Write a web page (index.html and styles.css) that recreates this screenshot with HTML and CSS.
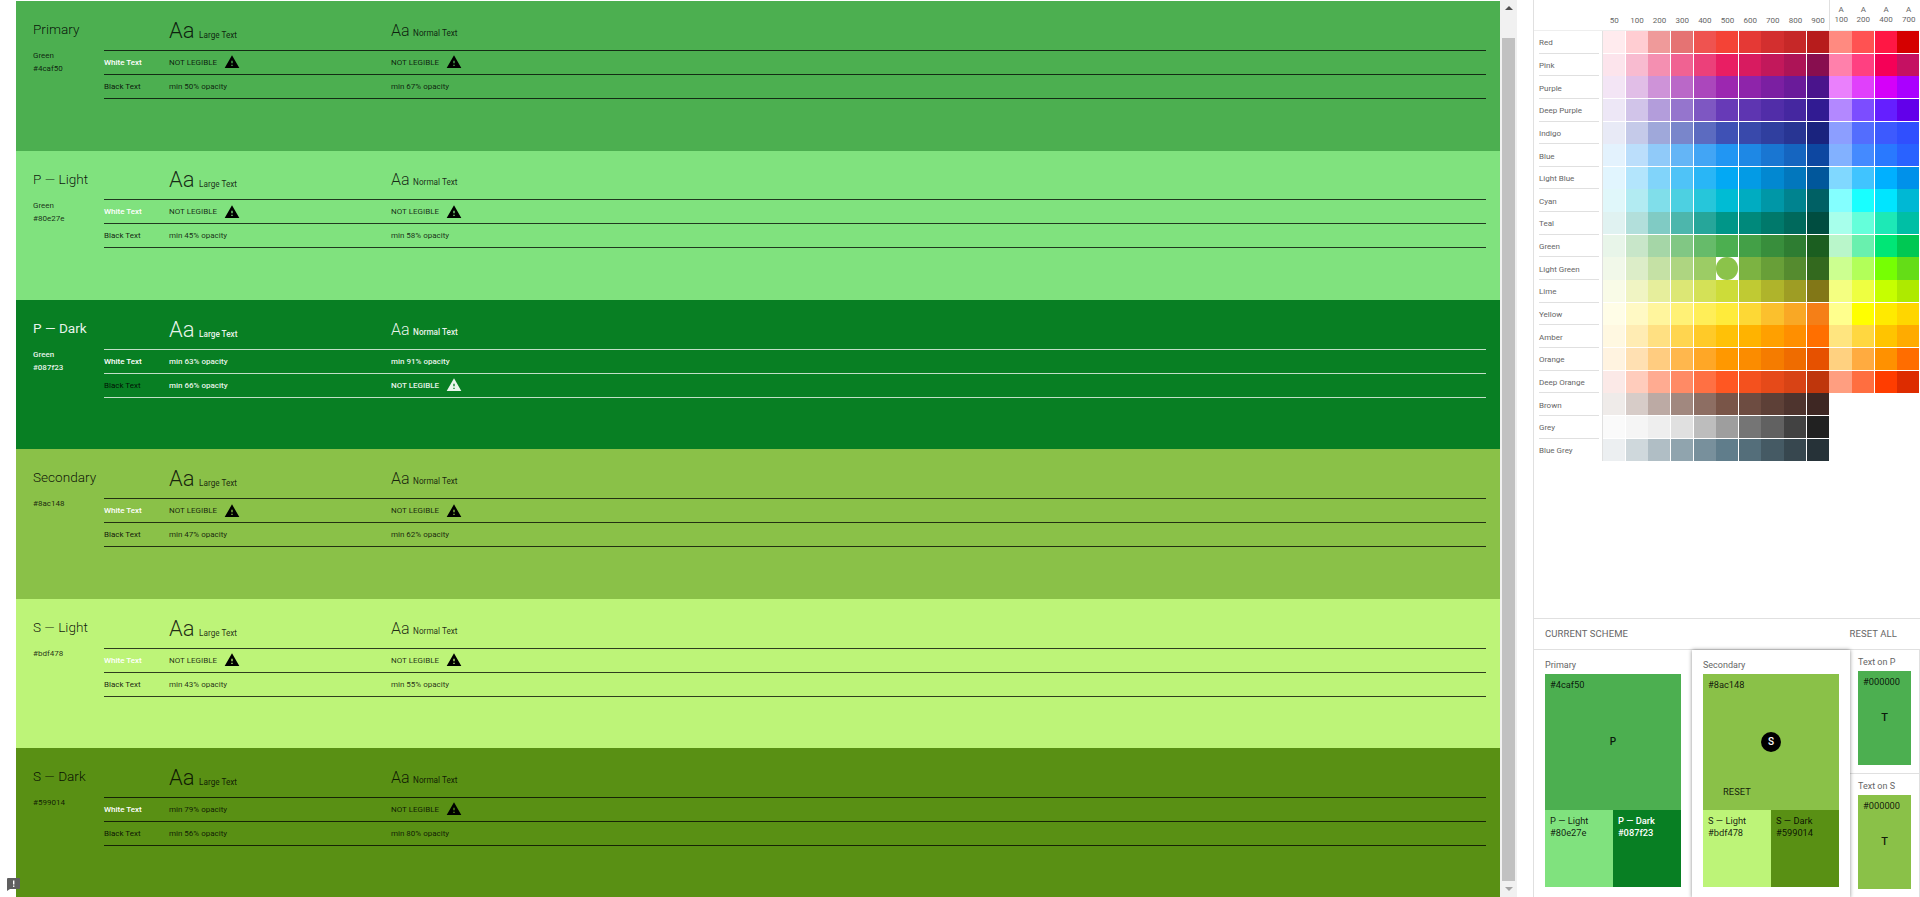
FILE: index.html
```html
<!DOCTYPE html>
<html lang="en">
<head>
    <meta charset="UTF-8">
    <meta name="viewport" content="width=device-width, initial-scale=1.0">
    <title>Color Tool</title>
    <link rel="stylesheet" href="styles.css">
</head>
<body>
    <svg class="icon-defs" width="0" height="0">
        <symbol id="warning" viewBox="0 0 24 24">
            <path d="M1 21h22L12 2 1 21zm12-3h-2v-2h2v2zm0-4h-2v-4h2v4z"/>
        </symbol>
    </svg>

    <main class="preview">
        <section class="panel primary">
            <div class="info">
                <h2>Primary</h2>
                <p>Green</p>
                <p>#4caf50</p>
            </div>
            <div class="contrast">
                <div class="contrast-row head">
                    <span></span>
                    <span><b class="aa-large">Aa</b> Large Text</span>
                    <span><b class="aa-normal">Aa</b> Normal Text</span>
                </div>
                <div class="contrast-row">
                    <span class="white-label">White Text</span>
                    <span class="bad">NOT LEGIBLE <svg><use href="#warning"/></svg></span>
                    <span class="bad">NOT LEGIBLE <svg><use href="#warning"/></svg></span>
                </div>
                <div class="contrast-row">
                    <span class="black-label">Black Text</span>
                    <span>min 50% opacity</span>
                    <span>min 67% opacity</span>
                </div>
            </div>
        </section>

        <section class="panel p-light">
            <div class="info">
                <h2>P — Light</h2>
                <p>Green</p>
                <p>#80e27e</p>
            </div>
            <div class="contrast">
                <div class="contrast-row head">
                    <span></span>
                    <span><b class="aa-large">Aa</b> Large Text</span>
                    <span><b class="aa-normal">Aa</b> Normal Text</span>
                </div>
                <div class="contrast-row">
                    <span class="white-label">White Text</span>
                    <span class="bad">NOT LEGIBLE <svg><use href="#warning"/></svg></span>
                    <span class="bad">NOT LEGIBLE <svg><use href="#warning"/></svg></span>
                </div>
                <div class="contrast-row">
                    <span class="black-label">Black Text</span>
                    <span>min 45% opacity</span>
                    <span>min 58% opacity</span>
                </div>
            </div>
        </section>

        <section class="panel p-dark">
            <div class="info">
                <h2>P — Dark</h2>
                <p>Green</p>
                <p>#087f23</p>
            </div>
            <div class="contrast">
                <div class="contrast-row head">
                    <span></span>
                    <span><b class="aa-large">Aa</b> Large Text</span>
                    <span><b class="aa-normal">Aa</b> Normal Text</span>
                </div>
                <div class="contrast-row">
                    <span class="white-label">White Text</span>
                    <span>min 63% opacity</span>
                    <span>min 91% opacity</span>
                </div>
                <div class="contrast-row">
                    <span class="black-label">Black Text</span>
                    <span>min 66% opacity</span>
                    <span class="bad">NOT LEGIBLE <svg><use href="#warning"/></svg></span>
                </div>
            </div>
        </section>

        <section class="panel secondary">
            <div class="info">
                <h2>Secondary</h2>
                <p>#8ac148</p>
            </div>
            <div class="contrast">
                <div class="contrast-row head">
                    <span></span>
                    <span><b class="aa-large">Aa</b> Large Text</span>
                    <span><b class="aa-normal">Aa</b> Normal Text</span>
                </div>
                <div class="contrast-row">
                    <span class="white-label">White Text</span>
                    <span class="bad">NOT LEGIBLE <svg><use href="#warning"/></svg></span>
                    <span class="bad">NOT LEGIBLE <svg><use href="#warning"/></svg></span>
                </div>
                <div class="contrast-row">
                    <span class="black-label">Black Text</span>
                    <span>min 47% opacity</span>
                    <span>min 62% opacity</span>
                </div>
            </div>
        </section>

        <section class="panel s-light">
            <div class="info">
                <h2>S — Light</h2>
                <p>#bdf478</p>
            </div>
            <div class="contrast">
                <div class="contrast-row head">
                    <span></span>
                    <span><b class="aa-large">Aa</b> Large Text</span>
                    <span><b class="aa-normal">Aa</b> Normal Text</span>
                </div>
                <div class="contrast-row">
                    <span class="white-label">White Text</span>
                    <span class="bad">NOT LEGIBLE <svg><use href="#warning"/></svg></span>
                    <span class="bad">NOT LEGIBLE <svg><use href="#warning"/></svg></span>
                </div>
                <div class="contrast-row">
                    <span class="black-label">Black Text</span>
                    <span>min 43% opacity</span>
                    <span>min 55% opacity</span>
                </div>
            </div>
        </section>

        <section class="panel s-dark">
            <div class="info">
                <h2>S — Dark</h2>
                <p>#599014</p>
            </div>
            <div class="contrast">
                <div class="contrast-row head">
                    <span></span>
                    <span><b class="aa-large">Aa</b> Large Text</span>
                    <span><b class="aa-normal">Aa</b> Normal Text</span>
                </div>
                <div class="contrast-row">
                    <span class="white-label">White Text</span>
                    <span>min 79% opacity</span>
                    <span class="bad">NOT LEGIBLE <svg><use href="#warning"/></svg></span>
                </div>
                <div class="contrast-row">
                    <span class="black-label">Black Text</span>
                    <span>min 56% opacity</span>
                    <span>min 80% opacity</span>
                </div>
            </div>
        </section>
    </main>

    <div class="scrollbar">
        <div class="arrow-up"></div>
        <div class="thumb"></div>
        <div class="arrow-down"></div>
    </div>

    <aside class="sidebar">
        <div class="palette">
            <div class="palette-head">
                <div class="head-spacer"></div>
                <div class="head-cols" id="paletteHead"></div>
            </div>
            <div class="palette-body">
                <ul class="hue-names" id="hueNames"></ul>
                <div class="swatches" id="swatches"></div>
            </div>
        </div>

        <div class="scheme">
            <div class="scheme-title">
                <span>Current Scheme</span>
                <span class="reset-all">Reset All</span>
            </div>
            <div class="scheme-cards">
                <div class="card">
                    <div class="card-label">Primary</div>
                    <div class="main-swatch primary">
                        <span>#4caf50</span>
                        <span class="letter">P</span>
                    </div>
                    <div class="sub-swatches">
                        <div class="p-light">P — Light<br>#80e27e</div>
                        <div class="p-dark">P — Dark<br>#087f23</div>
                    </div>
                </div>
                <div class="card active">
                    <div class="card-label">Secondary</div>
                    <div class="main-swatch secondary">
                        <span>#8ac148</span>
                        <span class="letter selected">S</span>
                        <span class="reset">RESET</span>
                    </div>
                    <div class="sub-swatches">
                        <div class="s-light">S — Light<br>#bdf478</div>
                        <div class="s-dark">S — Dark<br>#599014</div>
                    </div>
                </div>
                <div class="text-cards">
                    <div class="text-card">
                        <div class="card-label">Text on P</div>
                        <div class="text-swatch primary">
                            <span>#000000</span>
                            <span class="letter">T</span>
                        </div>
                    </div>
                    <div class="text-card">
                        <div class="card-label">Text on S</div>
                        <div class="text-swatch secondary">
                            <span>#000000</span>
                            <span class="letter">T</span>
                        </div>
                    </div>
                </div>
            </div>
        </div>
    </aside>

    <svg class="feedback" viewBox="0 0 13 13">
        <path d="M1 0h11a1 1 0 0 1 1 1v9a1 1 0 0 1-1 1H3l-3 2V1a1 1 0 0 1 1-1z"/>
        <rect x="6" y="2.5" width="1.4" height="4" fill="#fff"/>
        <rect x="6" y="7.5" width="1.4" height="1.4" fill="#fff"/>
    </svg>

    <script src="script.js"></script>
</body>
</html>
```

FILE: styles.css
```css
* {
    box-sizing: border-box;
}

body {
    margin: 0;
    height: 897px;
    overflow: hidden;
    display: flex;
    background: white;
    font-family: Roboto, sans-serif;
    font-size: 8px;
    color: #666;
}

/* scheme colours */
.primary { background: #4caf50; }
.p-light { background: #80e27e; }
.p-dark { background: #087f23; color: white; }
.secondary { background: #8ac148; }
.s-light { background: #bdf478; }
.s-dark { background: #599014; }

/* left preview column */
.preview {
    width: 1500px;
    padding: 1.2px 0 0 16px;
    flex-shrink: 0;
}

.panel {
    height: 149.4px;
    padding: 0 14px 0 17px;
    display: flex;
    color: rgba(0, 0, 0, 0.82);
    border-color: rgba(0, 0, 0, 0.75);
}

.panel.p-dark {
    color: rgba(255, 255, 255, 0.92);
    border-color: rgba(255, 255, 255, 0.75);
    font-weight: 500;
}

.info {
    width: 71px;
    flex-shrink: 0;
    padding-top: 21px;
}

.info h2 {
    margin: 0 0 13px;
    font-size: 13.6px;
    line-height: 14px;
    font-weight: 300;
    white-space: nowrap;
    color: rgba(0, 0, 0, 0.9);
}

.p-dark .info h2 {
    font-weight: 400;
    color: rgba(255, 255, 255, 0.92);
}

.info p {
    margin: 0;
    line-height: 13px;
}

.contrast {
    flex: 1;
    border-color: inherit;
}

.contrast-row {
    display: grid;
    grid-template-columns: 65px 222px 1fr;
    align-items: center;
    height: 24px;
    border-bottom: 1px solid;
    border-color: inherit;
}

.contrast-row.head {
    height: 49.8px;
    align-items: end;
    padding-bottom: 6px;
    font-size: 8.2px;
}

.aa-large {
    font-size: 22px;
    font-weight: 300;
    line-height: 26px;
    margin-right: 2.5px;
}

.aa-normal {
    font-size: 16px;
    font-weight: 300;
    line-height: 26px;
    margin-right: 1.5px;
}

.white-label {
    color: white;
    font-weight: 500;
}

.black-label {
    color: rgba(0, 0, 0, 0.88);
    font-weight: 400;
}

.bad {
    display: flex;
    align-items: center;
    gap: 6.5px;
}

.bad svg {
    width: 16px;
    height: 16px;
    fill: currentColor;
}

.primary .bad svg,
.p-light .bad svg,
.secondary .bad svg,
.s-light .bad svg,
.s-dark .bad svg {
    fill: black;
}

.icon-defs {
    position: absolute;
}

.scrollbar {
    width: 17px;
    flex-shrink: 0;
    background: #f1f1f1;
    display: flex;
    flex-direction: column;
    align-items: center;
}

.arrow-up {
    margin: 6px 0 28px;
    width: 0;
    border: 4px solid transparent;
    border-top: 0;
    border-bottom: 4px solid #505050;
}

.thumb {
    width: 13px;
    height: 843px;
    background: #c1c1c1;
}

.arrow-down {
    margin-top: 6px;
    width: 0;
    border: 4px solid transparent;
    border-bottom: 0;
    border-top: 4px solid #a3a3a3;
}

/* right column */
.sidebar {
    margin-left: 16px;
    flex: 1;
    border-left: 1px solid #e0e0e0;
    display: flex;
    flex-direction: column;
    justify-content: space-between;
}

.palette-head {
    display: flex;
    height: 31px;
    border-bottom: 1px solid #eee;
}

.head-spacer {
    width: 69px;
}

.head-cols {
    flex: 1;
    display: grid;
    grid-template-columns: repeat(14, 22.656px);
    text-align: center;
    line-height: 10px;
}

.head-cols div {
    display: flex;
    align-items: flex-end;
    justify-content: center;
    padding-bottom: 4px;
}

.head-cols .accent {
    padding-bottom: 5px;
}

.head-cols .first-accent {
    border-left: 1px solid #e0e0e0;
}

.palette-body {
    display: flex;
}

.hue-names {
    list-style: none;
    margin: 0;
    padding: 0 3px 0 5px;
    width: 69px;
    border-right: 1px solid #e0e0e0;
    display: grid;
    grid-template-rows: repeat(19, 22.656px);
}

.hue-names li {
    display: flex;
    align-items: center;
    padding-top: 2px;
    border-bottom: 1px solid #e0e0e0;
}

.hue-names li:last-child {
    border-bottom: 0;
}

.swatches {
    flex: 1;
    display: grid;
    grid-template-columns: repeat(14, 22.156px);
    grid-template-rows: repeat(19, 22.156px);
    gap: 0.5px;
    align-self: flex-start;
}

.swatch.current {
    border-radius: 50%;
}

.scheme {
    border-top: 1px solid #e0e0e0;
    height: 279px;
}

.scheme-title {
    height: 31px;
    display: flex;
    justify-content: space-between;
    align-items: center;
    padding: 0 23px 1px 11px;
    border-bottom: 1px solid #e0e0e0;
    font-size: 9.5px;
    text-transform: uppercase;
    letter-spacing: 0.1px;
}

.scheme-cards {
    display: flex;
    height: 248px;
    font-size: 9.3px;
    color: rgba(0, 0, 0, 0.87);
}

.card {
    width: 158px;
    padding: 9px 11px 0;
    border-color: #e0e0e0;
}

.card.active {
    position: relative;
    box-shadow: 0 0 4px rgba(0, 0, 0, 0.45);
}

.card-label {
    height: 15px;
    line-height: 12px;
    font-size: 9px;
    color: #666;
}

.main-swatch {
    width: 136px;
    height: 136px;
    padding: 6px 5px;
    line-height: 10px;
    position: relative;
}

.letter {
    position: absolute;
    left: 0;
    right: 0;
    top: 50%;
    margin-top: -6px;
    text-align: center;
    font-size: 10px;
    line-height: 12px;
    font-weight: 500;
}

.letter.selected {
    left: 58px;
    right: auto;
    top: 58px;
    margin: 0;
    width: 20px;
    height: 20px;
    line-height: 20px;
    border-radius: 50%;
    background: black;
    color: white;
}

.reset {
    position: absolute;
    left: 20px;
    top: 113px;
    letter-spacing: 0.1px;
}

.sub-swatches {
    display: flex;
    height: 77px;
}

.sub-swatches div {
    width: 68px;
    padding: 5px;
    line-height: 12px;
}

.sub-swatches .p-dark {
    font-weight: 500;
}

.text-cards {
    width: 70px;
    border-right: 1px solid #e0e0e0;
}

.text-card {
    height: 124px;
    padding: 6px 8px 0;
    border-bottom: 1px solid #e0e0e0;
}

.text-swatch {
    width: 53px;
    height: 94px;
    padding: 6px 5px;
    line-height: 10px;
    position: relative;
}

.text-swatch .letter {
    font-size: 11px;
}

.feedback {
    position: absolute;
    left: 7px;
    top: 878px;
    width: 13px;
    height: 13px;
    fill: #5f5f5f;
}
```

FILE: script.js
```js
// material palette, one row per hue: 50-900 then A100-A700
const palette = [
    ['Red', 'ffebee ffcdd2 ef9a9a e57373 ef5350 f44336 e53935 d32f2f c62828 b71c1c ff8a80 ff5252 ff1744 d50000'],
    ['Pink', 'fce4ec f8bbd0 f48fb1 f06292 ec407a e91e63 d81b60 c2185b ad1457 880e4f ff80ab ff4081 f50057 c51162'],
    ['Purple', 'f3e5f5 e1bee7 ce93d8 ba68c8 ab47bc 9c27b0 8e24aa 7b1fa2 6a1b9a 4a148c ea80fc e040fb d500f9 aa00ff'],
    ['Deep Purple', 'ede7f6 d1c4e9 b39ddb 9575cd 7e57c2 673ab7 5e35b1 512da8 4527a0 311b92 b388ff 7c4dff 651fff 6200ea'],
    ['Indigo', 'e8eaf6 c5cae9 9fa8da 7986cb 5c6bc0 3f51b5 3949ab 303f9f 283593 1a237e 8c9eff 536dfe 3d5afe 304ffe'],
    ['Blue', 'e3f2fd bbdefb 90caf9 64b5f6 42a5f5 2196f3 1e88e5 1976d2 1565c0 0d47a1 82b1ff 448aff 2979ff 2962ff'],
    ['Light Blue', 'e1f5fe b3e5fc 81d4fa 4fc3f7 29b6f6 03a9f4 039be5 0288d1 0277bd 01579b 80d8ff 40c4ff 00b0ff 0091ea'],
    ['Cyan', 'e0f7fa b2ebf2 80deea 4dd0e1 26c6da 00bcd4 00acc1 0097a7 00838f 006064 84ffff 18ffff 00e5ff 00b8d4'],
    ['Teal', 'e0f2f1 b2dfdb 80cbc4 4db6ac 26a69a 009688 00897b 00796b 00695c 004d40 a7ffeb 64ffda 1de9b6 00bfa5'],
    ['Green', 'e8f5e9 c8e6c9 a5d6a7 81c784 66bb6a 4caf50 43a047 388e3c 2e7d32 1b5e20 b9f6ca 69f0ae 00e676 00c853'],
    ['Light Green', 'f1f8e9 dcedc8 c5e1a5 aed581 9ccc65 8bc34a 7cb342 689f38 558b2f 33691e ccff90 b2ff59 76ff03 64dd17'],
    ['Lime', 'f9fbe7 f0f4c3 e6ee9c dce775 d4e157 cddc39 c0ca33 afb42b 9e9d24 827717 f4ff81 eeff41 c6ff00 aeea00'],
    ['Yellow', 'fffde7 fff9c4 fff59d fff176 ffee58 ffeb3b fdd835 fbc02d f9a825 f57f17 ffff8d ffff00 ffea00 ffd600'],
    ['Amber', 'fff8e1 ffecb3 ffe082 ffd54f ffca28 ffc107 ffb300 ffa000 ff8f00 ff6f00 ffe57f ffd740 ffc400 ffab00'],
    ['Orange', 'fff3e0 ffe0b2 ffcc80 ffb74d ffa726 ff9800 fb8c00 f57c00 ef6c00 e65100 ffd180 ffab40 ff9100 ff6d00'],
    ['Deep Orange', 'fbe9e7 ffccbc ffab91 ff8a65 ff7043 ff5722 f4511e e64a19 d84315 bf360c ff9e80 ff6e40 ff3d00 dd2c00'],
    ['Brown', 'efebe9 d7ccc8 bcaaa4 a1887f 8d6e63 795548 6d4c41 5d4037 4e342e 3e2723'],
    ['Grey', 'fafafa f5f5f5 eeeeee e0e0e0 bdbdbd 9e9e9e 757575 616161 424242 212121'],
    ['Blue Grey', 'eceff1 cfd8dc b0bec5 90a4ae 78909c 607d8b 546e7a 455a64 37474f 263238']
];

const shades = ['50', '100', '200', '300', '400', '500', '600', '700', '800', '900', 'A<br>100', 'A<br>200', 'A<br>400', 'A<br>700'];

const head = document.getElementById('paletteHead');
shades.forEach((shade, i) => {
    const col = document.createElement('div');
    col.innerHTML = `<span>${shade}</span>`;
    if (i >= 10) col.classList.add('accent');
    if (i === 10) col.classList.add('first-accent');
    head.appendChild(col);
});

const names = document.getElementById('hueNames');
const swatches = document.getElementById('swatches');

palette.forEach(([name, colors]) => {
    const label = document.createElement('li');
    label.textContent = name;
    names.appendChild(label);

    const list = colors.split(' ');
    for (let i = 0; i < 14; i++) {
        const cell = document.createElement('div');
        cell.classList.add('swatch');
        if (list[i]) cell.style.background = '#' + list[i];
        if (name === 'Light Green' && i === 5) cell.classList.add('current');
        swatches.appendChild(cell);
    }
});
```
